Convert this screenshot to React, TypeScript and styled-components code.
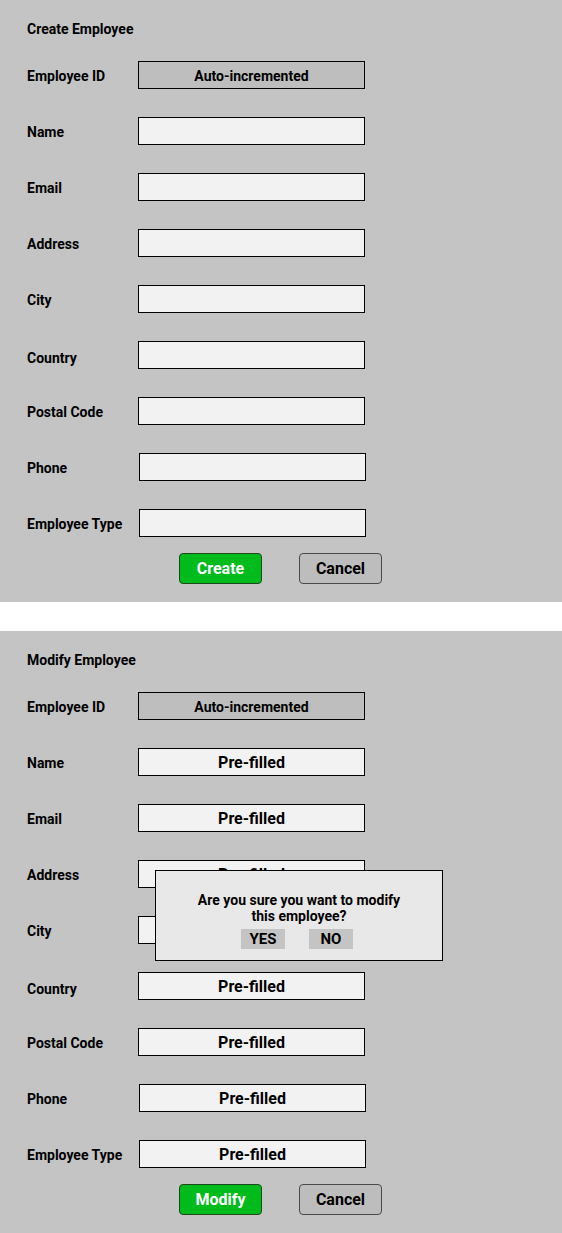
import React from "react";
import styled, { createGlobalStyle } from "styled-components";

const Global = createGlobalStyle`
  html, body { margin: 0; padding: 0; background: #ffffff; }
  body { font-family: Roboto, "Liberation Sans", Arial, sans-serif; color: #000; }
`;

const Page = styled.div`
  display: flex;
  flex-direction: column;
  gap: 29px;
  width: 562px;
`;

const Panel = styled.section`
  position: relative;
  box-sizing: border-box;
  height: 602px;
  background: #c4c4c4;
  padding: 20px 0 0 27px;
  display: flex;
  flex-direction: column;
`;

const Title = styled.h2`
  margin: 0 0 25px 0;
  height: 16px;
  font-size: 14px;
  line-height: 16px;
  font-weight: 700;
  transform: translateY(1px);
`;

const Rows = styled.div`
  display: flex;
  flex-direction: column;
  gap: 28px;
`;

const Row = styled.div`
  display: grid;
  grid-template-columns: 111px 227px;
  align-items: center;
  height: 28px;
`;

const Label = styled.span<{ $dy?: number }>`
  font-size: 14px;
  line-height: 16px;
  font-weight: 700;
  white-space: nowrap;
  transform: translateY(${(p) => p.$dy ?? 1}px);
`;

const Field = styled.div<{ $readonly?: boolean; $dx?: number }>`
  box-sizing: border-box;
  height: 28px;
  width: 227px;
  margin-left: ${(p) => p.$dx ?? 0}px;
  border: 1px solid #000;
  background: ${(p) => (p.$readonly ? "#bebebe" : "#f2f2f2")};
  display: flex;
  align-items: center;
  justify-content: center;
  font-weight: 700;
  font-size: ${(p) => (p.$readonly ? "14px" : "16px")};
  line-height: 18px;
  padding-top: 1px;
`;

const Actions = styled.div`
  display: flex;
  gap: 37px;
  margin: 16px 0 0 152px;
`;

const Button = styled.button<{ $primary?: boolean }>`
  box-sizing: border-box;
  width: 83px;
  height: 31px;
  border-radius: 4px;
  border: 1px solid ${(p) => (p.$primary ? "#1d4a1d" : "#4a4a4a")};
  background: ${(p) => (p.$primary ? "#00bb1c" : "#bdbdbd")};
  color: ${(p) => (p.$primary ? "#ffffff" : "#000000")};
  font-family: Roboto, "Liberation Sans", Arial, sans-serif;
  font-size: 16px;
  font-weight: 700;
  padding: 0;
  cursor: pointer;
`;

const Dialog = styled.div`
  position: absolute;
  left: 155px;
  top: 239px;
  box-sizing: border-box;
  width: 288px;
  height: 91px;
  background: #e8e8e8;
  border: 1px solid #000;
  display: flex;
  flex-direction: column;
  align-items: center;
  padding-top: 21px;
`;

const DialogText = styled.p`
  margin: 0;
  font-size: 14px;
  line-height: 16px;
  font-weight: 700;
  text-align: center;
`;

const DialogActions = styled.div`
  display: flex;
  gap: 24px;
  margin: 5px 4px 0 0;
`;

const DialogButton = styled.button`
  width: 44px;
  height: 20px;
  border: none;
  background: #c4c4c4;
  font-family: Roboto, "Liberation Sans", Arial, sans-serif;
  font-size: 15px;
  font-weight: 700;
  padding: 0;
  line-height: 20px;
`;

type FieldDef = { label: string; dx?: number; dy?: number };

const fields: FieldDef[] = [
  { label: "Name" },
  { label: "Email" },
  { label: "Address" },
  { label: "City" },
  { label: "Country", dy: 3 },
  { label: "Postal Code" },
  { label: "Phone", dx: 1 },
  { label: "Employee Type", dx: 1 },
];

function EmployeeForm({
  title,
  prefilled,
  action,
  children,
}: {
  title: string;
  prefilled?: boolean;
  action: string;
  children?: React.ReactNode;
}) {
  return (
    <Panel>
      <Title>{title}</Title>
      <Rows>
        <Row>
          <Label>Employee ID</Label>
          <Field $readonly>Auto-incremented</Field>
        </Row>
        {fields.map((f) => (
          <Row key={f.label}>
            <Label $dy={f.dy}>{f.label}</Label>
            <Field $dx={f.dx}>{prefilled ? "Pre-filled" : ""}</Field>
          </Row>
        ))}
      </Rows>
      <Actions>
        <Button $primary>{action}</Button>
        <Button>Cancel</Button>
      </Actions>
      {children}
    </Panel>
  );
}

export default function App() {
  return (
    <>
      <Global />
      <Page>
        <EmployeeForm title="Create Employee" action="Create" />
        <EmployeeForm title="Modify Employee" action="Modify" prefilled>
          <Dialog>
            <DialogText>
              Are you sure you want to modify
              <br />
              this employee?
            </DialogText>
            <DialogActions>
              <DialogButton>YES</DialogButton>
              <DialogButton>NO</DialogButton>
            </DialogActions>
          </Dialog>
        </EmployeeForm>
      </Page>
    </>
  );
}
